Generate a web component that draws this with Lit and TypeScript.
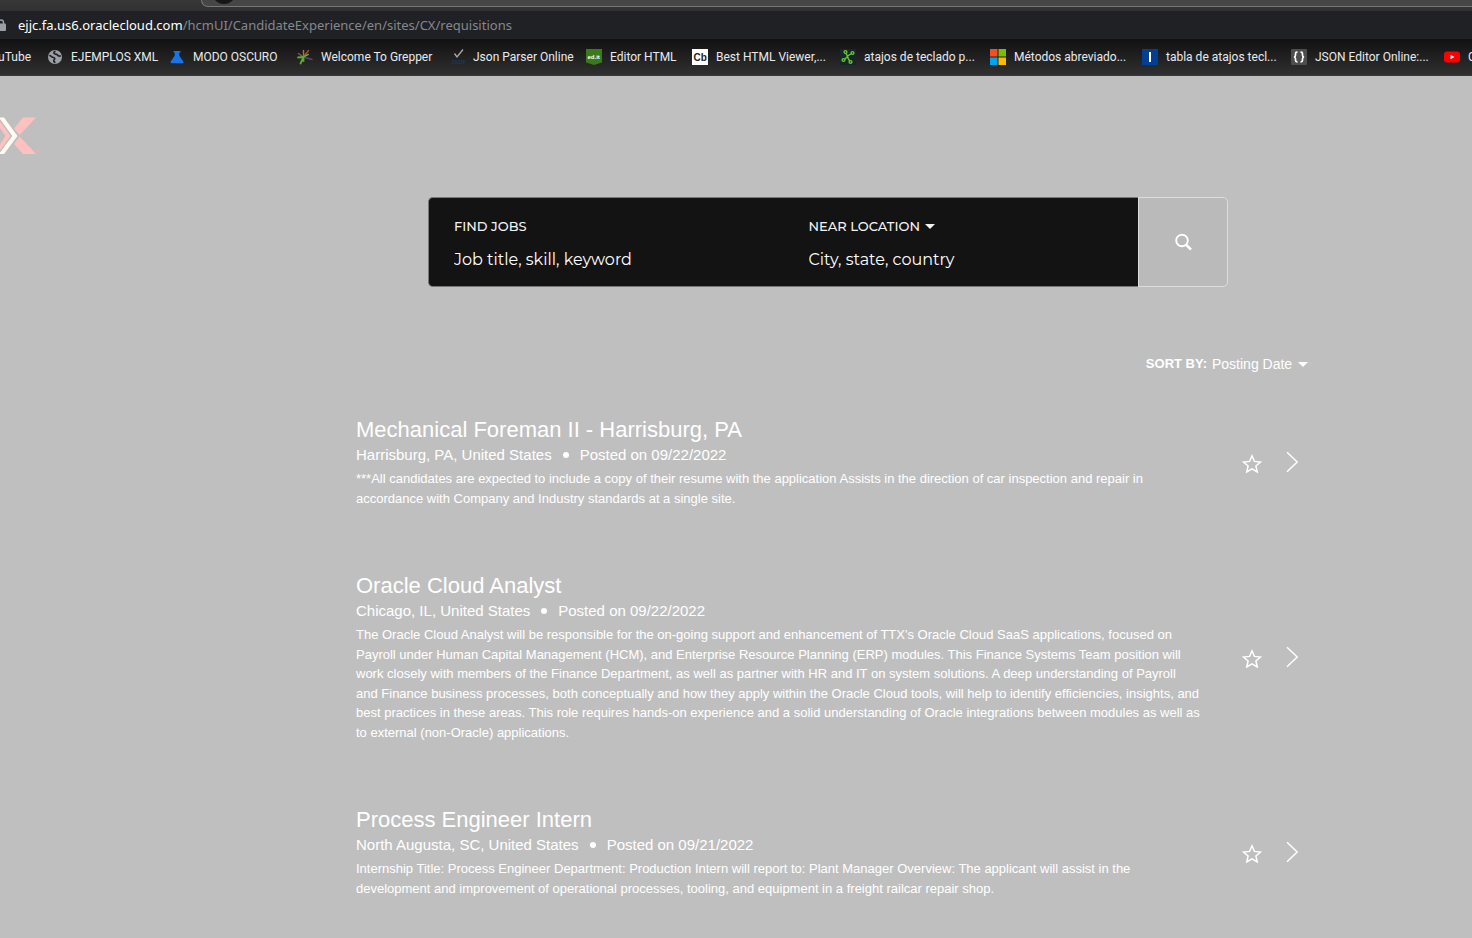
import { LitElement, html, css, svg } from 'lit';
import { customElement, state } from 'lit/decorators.js';

interface Bookmark { label: string; icon: unknown; }
interface Job { title: string; place: string; posted: string; text: string; }

const bookmarks: Bookmark[] = [
  { label: 'EJEMPLOS XML', icon: svg`<circle cx="8" cy="8" r="7" fill="#9aa0a6"/><path d="M2.2 6.5c2 0 2.600 2 4.300 2 1.500 0 1.500 1.500.5 2.500-.6.8.2 2.300 1.500 2.500M8.500 2.200c-1.500.5-2 1.500-1.300 2.300.8.9 2.500.3 3.300 1.500.7 1.200 2 1.200 3.300.7" stroke="#222" stroke-width="1.700" fill="none"/>` },
  { label: 'MODO OSCURO', icon: svg`<path d="M4.500 2h7v1.500h-1.200v3.200l4 5.800c.6 1-.1 1.700-1 1.700H2.700c-.9 0-1.600-.7-1-1.700l4-5.800V3.500H4.500z" fill="#1a73e8"/>` },
  { label: 'Welcome To Grepper', icon: svg`<g fill="none" stroke-width="1.400" stroke-linecap="round"><path d="M6 8 1.500 4.500" stroke="#8a5f2a"/><path d="M6.500 7.500 6.500 1.500" stroke="#b0703a"/><path d="M7 7 11.500 1.500" stroke="#b8433a"/><path d="M8 8.500 15 10.500" stroke="#554383"/><path d="M1 8.500 6 8 11 5.500M6.500 8 3.500 14.500M6.500 8v4" stroke="#63a53b" stroke-width="1.800"/></g>` },
  { label: 'Json Parser Online', icon: svg`<path d="M5.500 4.500 8 8l6-7.500" fill="none" stroke="#aaa" stroke-width="1.300"/><text x="2" y="15" font-size="6" font-weight="700" fill="#173a5c">JSON</text>` },
  { label: 'Editor HTML', icon: svg`<path d="M0 0h16v13.500L8 16l-8-2.500z" fill="#3a7a1c"/><text x="1.500" y="10" font-size="6" font-weight="700" fill="#fff">ed.it</text>` },
  { label: 'Best HTML Viewer,...', icon: svg`<path d="M0 0h16v16H0z" fill="#fff"/><text x="1.500" y="11.500" font-size="10" font-weight="700" fill="#222">Cb</text>` },
  { label: 'atajos de teclado p...', icon: svg`<path d="M0 0h16v16H0z" fill="#16262a"/><g fill="none" stroke="#69c430" stroke-width="1.400"><path d="M5.800 4.200 7.500 7l4-2.500M7.500 7l.8 3 1.700 2M7.500 7.500 5 10"/><circle cx="5.500" cy="3" r="1.400"/><circle cx="12.500" cy="4" r="1.400"/><circle cx="3.500" cy="11" r="1.400"/><circle cx="10.500" cy="13" r="1.400"/></g>` },
  { label: 'Métodos abreviado...', icon: svg`<path d="M0 0h7.500v7.500H0z" fill="#f25022"/><path d="M8.500 0H16v7.500H8.500z" fill="#7fba00"/><path d="M0 8.500h7.500V16H0z" fill="#00a4ef"/><path d="M8.500 8.500H16V16H8.500z" fill="#ffb900"/>` },
  { label: 'tabla de atajos tecl...', icon: svg`<path d="M0 0h16v16H0z" fill="#023e94"/><path d="M7 3h2v10H7z" fill="#fff"/>` },
  { label: 'JSON Editor Online:...', icon: svg`<rect width="16" height="16" rx="1" fill="#4d4d4d"/><path d="M6.500 3.200H6c-1.200 0-1.500.6-1.500 1.600v1.400c0 1-.5 1.600-1.500 1.800 1 .2 1.500.8 1.500 1.800v1.400c0 1 .3 1.600 1.500 1.600h.5M9.500 3.200h.5c1.200 0 1.500.6 1.500 1.600v1.400c0 1 .5 1.600 1.500 1.800-1 .2-1.500.8-1.500 1.800v1.400c0 1-.3 1.600-1.500 1.600h-.5" fill="none" stroke="#fff" stroke-width="1.700"/>` },
  { label: 'Curso', icon: svg`<rect y="2.500" width="16" height="11" rx="3" fill="#f00"/><path d="M6.500 5.800v4.400L10.300 8z" fill="#fff"/>` },
];

const jobs: Job[] = [
  { title: 'Mechanical Foreman II - Harrisburg, PA', place: 'Harrisburg, PA, United States', posted: '09/22/2022',
    text: '***All candidates are expected to include a copy of their resume with the application Assists in the direction of car inspection and repair in accordance with Company and Industry standards at a single site.' },
  { title: 'Oracle Cloud Analyst', place: 'Chicago, IL, United States', posted: '09/22/2022',
    text: "The Oracle Cloud Analyst will be responsible for the on-going support and enhancement of TTX's Oracle Cloud SaaS applications, focused on Payroll under Human Capital Management (HCM), and Enterprise Resource Planning (ERP) modules. This Finance Systems Team position will work closely with members of the Finance Department, as well as partner with HR and IT on system solutions. A deep understanding of Payroll and Finance business processes, both conceptually and how they apply within the Oracle Cloud tools, will help to identify efficiencies, insights, and best practices in these areas. This role requires hands-on experience and a solid understanding of Oracle integrations between modules as well as to external (non-Oracle) applications." },
  { title: 'Process Engineer Intern', place: 'North Augusta, SC, United States', posted: '09/21/2022',
    text: 'Internship Title: Process Engineer Department: Production Intern will report to: Plant Manager Overview: The applicant will assist in the development and improvement of operational processes, tooling, and equipment in a freight railcar repair shop.' },
];

const caret = html`<svg class="caret" viewBox="0 0 10 5" aria-hidden="true"><path d="M0 0h10L5 5z" fill="currentColor"/></svg>`;

@customElement('browser-chrome')
class BrowserChrome extends LitElement {
  static styles = css`
    :host { display: block; }
    .tabs { height: 11px; overflow: hidden; background: linear-gradient(#383838, #303030); }
    .tab { box-sizing: border-box; height: 7px; margin-left: 201px; padding-left: 10px; overflow: hidden;
      background: #464646; border: solid #777; border-width: 0 0 1px 1px; border-bottom-left-radius: 8px; }
    .avatar { display: block; width: 24px; height: 24px; margin-top: -20px; border-radius: 50%; background: #161616; }
    .address { display: flex; align-items: center; height: 28px; gap: 12px; background: #202124; overflow: hidden;
      font: 13px/20px "Noto Sans", sans-serif; color: #85888c; }
    .lock { flex: none; width: 10px; height: 12px; margin-left: -4px; }
    .host { color: #fff; }
    .marks { display: grid; box-sizing: border-box; height: 37px; align-items: center; overflow: hidden;
      grid-template-columns: 47px 122px 128px 152px 137px 106px 148px 150px 152px 149px 153px 80px;
      background: linear-gradient(#111, #303030); border-bottom: 1px solid #3b383b;
      font: 12px/16px Roboto, sans-serif; color: #e8eaed; }
    a { display: flex; align-items: center; gap: 8px; color: inherit; text-decoration: none; white-space: nowrap; }
    .cut { justify-content: flex-end; padding-right: 16px; }
    .icon { flex: none; width: 16px; height: 16px; font-family: "Liberation Sans", sans-serif; }
  `;
  render() {
    return html`
      <div class="tabs"><div class="tab"><span class="avatar"></span></div></div>
      <div class="address">
        <svg class="lock" viewBox="0 0 10 12" aria-hidden="true"><path d="M2.500 5V3.500a2.500 2.500 0 0 1 5 0V5" fill="none" stroke="#9aa0a6" stroke-width="1.400"/><rect y="4.500" width="10" height="7.500" rx="1" fill="#9aa0a6"/></svg>
        <span><span class="host">ejjc.fa.us6.oraclecloud.com</span>/hcmUI/CandidateExperience/en/sites/CX/requisitions</span>
      </div>
      <nav class="marks" aria-label="Bookmarks">
        <a class="cut" href="#">YouTube</a>
        ${bookmarks.map(b => html`<a href="#"><svg class="icon" viewBox="0 0 16 16" aria-hidden="true">${b.icon}</svg>${b.label}</a>`)}
      </nav>`;
  }
}

@customElement('job-search')
class JobSearch extends LitElement {
  static styles = css`
    :host { display: block; width: 100%; max-width: 800px; }
    form { display: flex; height: 90px; color: #fff; font-family: Montserrat, Lato, sans-serif; }
    .fields { flex: 1; display: grid; grid-template-columns: 1fr 1fr; background: #131313;
      border: solid #777; border-width: 1px 0 1px 1px; border-radius: 5px 0 0 5px; }
    .field { display: flex; flex-direction: column; align-items: flex-start; gap: 12px; padding: 18px 25px 0; min-width: 0; }
    .label { display: flex; align-items: center; gap: 5px; padding: 0; border: 0; background: none; color: #f2f2f2;
      font: 500 13px/20px Montserrat, Lato, sans-serif; }
    input { width: 100%; padding: 0; border: 0; outline: 0; background: none; color: inherit;
      font: 16px/24px Montserrat, Lato, sans-serif; }
    input::placeholder { color: #fff; opacity: 1; }
    .caret { width: 10px; height: 5px; }
    .go { display: grid; place-items: center; width: 90px; padding: 0; border: 1px solid #ddd; border-radius: 0 5px 5px 0;
      background: #bababa; color: #fff; }
    .go svg { width: 18px; height: 18px; }
  `;
  render() {
    return html`
      <form @submit=${(e: Event) => e.preventDefault()}>
        <div class="fields">
          <div class="field">
            <label class="label" for="keyword">FIND JOBS</label>
            <input id="keyword" placeholder="Job title, skill, keyword">
          </div>
          <div class="field">
            <button class="label" id="near" type="button" aria-haspopup="listbox">NEAR LOCATION ${caret}</button>
            <input aria-labelledby="near" placeholder="City, state, country">
          </div>
        </div>
        <button class="go" aria-label="Search">
          <svg viewBox="0 0 18 18" aria-hidden="true"><circle cx="8" cy="7.500" r="5.800" fill="none" stroke="currentColor" stroke-width="1.900"/><path d="M12 11.700l5 5" stroke="currentColor" stroke-width="2.600"/></svg>
        </button>
      </form>`;
  }
}

@customElement('app-root')
class AppRoot extends LitElement {
  @state() private saved = new Set<string>();

  static styles = css`
    :host { display: flex; flex-direction: column; height: 100vh; overflow: hidden; background: #bfbfbf; color: #fff;
      font-family: "Liberation Sans", Arial, sans-serif; }
    main { flex: 1; min-height: 0; overflow: hidden; }
    .logo { display: block; width: 40px; height: 38px; margin-top: 41px; }
    .content { display: flex; flex-direction: column; align-items: center; padding: 42px 0 0 184px; }
    .results { box-sizing: border-box; width: 100%; max-width: 960px; padding: 0 0 0 8px; }
    .sort { display: flex; justify-content: flex-end; align-items: center; margin-top: 67px; font-size: 14px; line-height: 20px; }
    .sort label { font-size: 13px; font-weight: 700; margin-right: 5px; }
    .sort select { appearance: none; padding: 0; border: 0; background: none; color: inherit; font: inherit; }
    .caret { width: 10px; height: 5px; margin-left: 5px; }
    ul { display: flex; flex-direction: column; gap: 62px; margin: 41px 0 0; padding: 0 10px 0 0; list-style: none; }
    li { display: flex; align-items: center; }
    .body { flex: 1; max-width: 844px; margin-right: auto; }
    h2 { margin: 0; font-weight: 400; font-size: 22px; line-height: 30px; }
    h2 a { color: inherit; text-decoration: none; }
    .meta { display: flex; align-items: center; gap: 11px; font-size: 15px; line-height: 20px; }
    .dot { width: 6px; height: 6px; border-radius: 50%; background: #fff; }
    p { margin: 4px 0 1px; font-size: 13px; line-height: 1.5; }
    .actions { display: flex; align-items: center; gap: 24px; }
    .actions button, .actions a { display: block; padding: 0; border: 0; background: none; color: inherit; }
    .actions svg { display: block; height: 22px; }
    .star { width: 20px; }
    .arrow { width: 12px; }
  `;

  private toggle(title: string) {
    const next = new Set(this.saved);
    if (!next.delete(title)) next.add(title);
    this.saved = next;
  }

  render() {
    return html`
      <browser-chrome></browser-chrome>
      <main>
        <svg class="logo" viewBox="0 0 40 38" role="img" aria-label="TTX">
          <path d="M23 .5h13L19.500 18 14 11.500zM19.500 19.500 36 37H23l-9-10z" fill="#ffc0c0"/>
          <path d="M0 4.500 10.500 19 0 33.500v-6L5.500 19 0 11z" fill="#ffc0c0"/>
          <path d="M0 .5h4L17.500 19 4 37H0v-1.500L12.300 19 0 2z" fill="#fffaf2"/>
          <circle cx="37.700" cy="34" r="1.600" fill="#eeb0b0"/>
        </svg>
        <div class="content">
          <job-search></job-search>
          <section class="results">
            <div class="sort">
              <label for="sort">SORT BY:</label>
              <select id="sort"><option>Posting Date</option></select>${caret}
            </div>
            <ul>
              ${jobs.map(j => html`
                <li>
                  <div class="body">
                    <h2><a href="#">${j.title}</a></h2>
                    <div class="meta"><span>${j.place}</span><span class="dot"></span><span>Posted on ${j.posted}</span></div>
                    <p>${j.text}</p>
                  </div>
                  <div class="actions">
                    <button aria-label="Save job" aria-pressed=${this.saved.has(j.title)} @click=${() => this.toggle(j.title)}>
                      <svg class="star" viewBox="0 0 20 22" aria-hidden="true"><path d="M10 4.800l2.400 5.600 6.100.6-4.600 4 1.400 6-5.300-3.200L4.700 21l1.400-6-4.600-4 6.100-.6z" fill=${this.saved.has(j.title) ? '#fff' : 'none'} stroke="#fff" stroke-width="1.500"/></svg>
                    </button>
                    <a href="#" aria-label="Open job"><svg class="arrow" viewBox="0 0 12 22" aria-hidden="true"><path d="M1 1.200 11.200 11 1 20.800" fill="none" stroke="#fff" stroke-width="1.500"/></svg></a>
                  </div>
                </li>`)}
            </ul>
          </section>
        </div>
      </main>`;
  }
}
